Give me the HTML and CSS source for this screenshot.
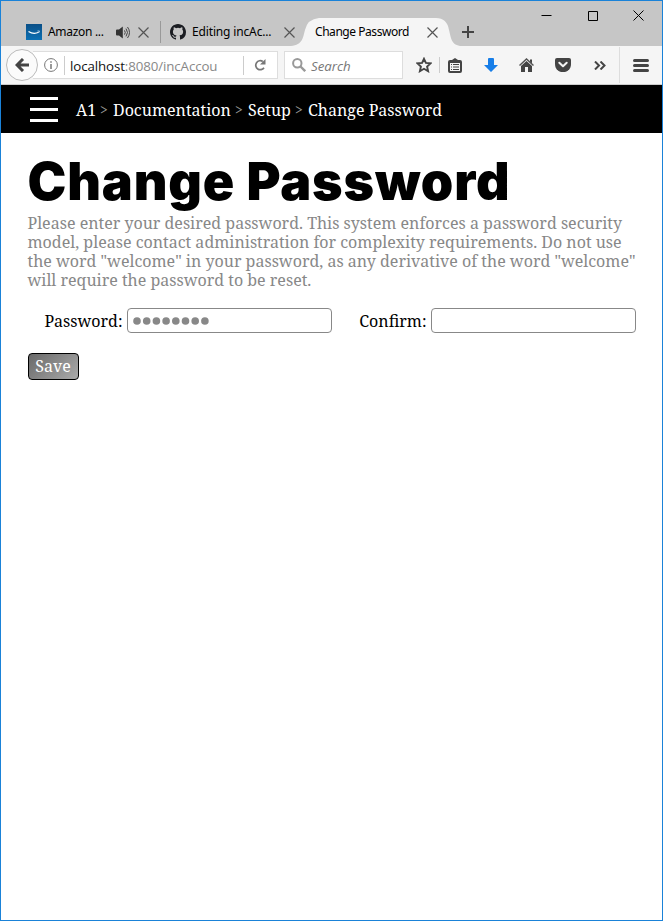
FILE: index.html
```html
<!DOCTYPE html>
<html lang="en">
<head>
<meta charset="utf-8">
<title>Change Password</title>
<link rel="stylesheet" href="styles.css">
</head>
<body>
<div class="window">
  <header class="tabstrip">
    <div class="tab tab-first">
      <svg class="favicon" width="16" height="16" viewBox="0 0 16 16"><defs><linearGradient id="az" x2="0" y2="1"><stop stop-color="#0a4f87"/><stop offset="1" stop-color="#0b70b4"/></linearGradient></defs><path fill="url(#az)" d="M0 0h16v16H0z"/><path d="M2.500 7.500q5 3.200 10.200.8" fill="none" stroke="#fff" stroke-width="1.200"/><path d="M11.500 7h2l-.6 1.700" fill="none" stroke="#cde" stroke-width=".8"/></svg>
      <span class="tab-title title-amazon">Amazon ...</span>
      <svg class="sound" width="14" height="13" viewBox="0 0 14 13"><path d="M0 4.500q0-1 1-1h2L6.800.5v12L3 9.500H1q-1 0-1-1z" fill="#333"/><path d="M8.500 4.400q1.500 2.100 0 4.200M10 2.600q3 3.900 0 7.800M11.500 1q4 5.500 0 11" fill="none" stroke="#444" stroke-width="1"/></svg>
      <svg class="close" width="11" height="11" viewBox="0 0 11 11"><path d="M.5.5l10 10m0-10l-10 10"/></svg>
    </div>
    <div class="tab tab-second">
      <svg class="favicon" width="16" height="16" viewBox="0 0 16 16"><path fill="#1b1d22" d="M8 0C3.580 0 0 3.580 0 8c0 3.540 2.290 6.530 5.470 7.590.4.070.550-.170.550-.380 0-.190-.010-.820-.010-1.490-2.010.370-2.530-.490-2.690-.940-.090-.230-.480-.940-.820-1.130-.280-.150-.680-.520-.010-.530.630-.010 1.080.580 1.230.820.720 1.210 1.870.870 2.330.660.070-.520.280-.870.510-1.070-1.780-.200-3.640-.890-3.640-3.950 0-.870.310-1.590.820-2.150-.080-.200-.360-1.020.080-2.120 0 0 .670-.210 2.200.820a7.600 7.600 0 0 1 4 0c1.530-1.040 2.200-.820 2.200-.820.440 1.100.160 1.920.080 2.120.510.560.820 1.270.820 2.150 0 3.070-1.870 3.750-3.650 3.950.290.250.540.730.540 1.480 0 1.070-.010 1.930-.010 2.200 0 .210.150.460.550.380A8 8 0 0 0 16 8c0-4.420-3.580-8-8-8z"/></svg>
      <span class="tab-title title-edit">Editing incAc...</span>
      <svg class="close" width="11" height="11" viewBox="0 0 11 11"><path d="M.5.5l10 10m0-10l-10 10"/></svg>
    </div>
    <div class="tab tab-active">
      <svg class="tab-shape" width="172" height="28" viewBox="0 0 172 28"><path fill="#f5f5f5" d="M-2 28C12 28 12 19 14 12Q16.500 1 28 0H145Q156 0 158 12C160 19 160 28 171 28z"/></svg>
      <span class="tab-title title-change">Change Password</span>
      <svg class="close" width="11" height="11" viewBox="0 0 11 11"><path d="M.5.5l10 10m0-10l-10 10"/></svg>
    </div>
    <svg class="newtab" width="12" height="12" viewBox="0 0 12 12"><path d="M6 0v12M0 6h12" stroke="#444" stroke-width="2"/></svg>
    <div class="controls">
      <svg width="11" height="11" viewBox="0 0 11 11"><path d="M.5 5.500h10"/></svg>
      <svg width="11" height="11" viewBox="0 0 11 11"><path d="M1.500 1.500h9v9h-9z"/></svg>
      <svg width="11" height="11" viewBox="0 0 11 11"><path d="M.5.5l10 10m0-10l-10 10"/></svg>
    </div>
  </header>

  <nav class="toolbar">
    <div class="back"><svg width="15" height="14" viewBox="0 0 15 14"><path d="M8 1L2 7l6 6M2.500 7H14" fill="none" stroke="#444" stroke-width="3"/></svg></div>
    <div class="urlbar">
      <svg width="14" height="14" viewBox="0 0 14 14"><circle cx="7" cy="7" r="6.400" fill="none" stroke="#777" stroke-width="1"/><path d="M7 3.200v1.600M7 6v5" stroke="#777" stroke-width="1.500"/></svg>
      <span class="rule"></span>
      <span class="url"><b>localhost</b>:8080/incAccou</span>
      <span class="rule"></span>
      <svg class="reload" width="12" height="12" viewBox="0 0 12 12"><path d="M10 8.700A4.500 4.500 0 1 1 8.800 2.500" fill="none" stroke="#777" stroke-width="1.700"/><path d="M11.500 0v5.500H6z" fill="#777"/></svg>
    </div>
    <div class="search">
      <svg width="14" height="14" viewBox="0 0 14 14"><circle cx="5.300" cy="5.300" r="4.200" fill="none" stroke="#999" stroke-width="2"/><path d="M8.500 8.500l4.700 4.700" stroke="#999" stroke-width="2.400"/></svg>
      <span>Search</span>
    </div>
    <div class="tools">
      <svg class="star" width="16" height="16" viewBox="0 0 16 16"><path d="M8 1.800l1.900 4.100 4.600.5-3.400 3.100 1 4.700L8 11.800l-4.100 2.400 1-4.700L1.500 6.400l4.600-.5z" fill="none" stroke="#444" stroke-width="1.900"/></svg>
      <span class="rule"></span>
      <svg class="clip" width="14" height="15" viewBox="0 0 14 15"><path d="M4 2L7 0l3 2h2q2 0 2 2v9q0 2-2 2H2q-2 0-2-2V4q0-2 2-2zM2 5v8h10V5z" fill="#444" fill-rule="evenodd"/><path d="M3 6.500h1M5 6.500h6M3 9h1M5 9h6M3 11.500h1M5 11.500h6" stroke="#444" stroke-width="1.100"/></svg>
      <svg class="down" width="14" height="14" viewBox="0 0 14 14"><path d="M4 1q0-1 1-1h4q1 0 1 1v6h4l-7 7-7-7h4z" fill="#177ee8"/></svg>
      <svg class="home" width="15" height="14" viewBox="0 0 15 14"><path d="M.5 7.500L7.500 1l7 6.500" fill="none" stroke="#555" stroke-width="1.500"/><path d="M11 1.500h2v4l-2-2zM2 8l5.500-5L13 8v6H9V9H6v5H2z" fill="#444"/></svg>
      <svg class="pocket" width="16" height="14" viewBox="0 0 16 14"><path d="M2 0h12q2 0 2 2v4q0 4-3 6.500Q8 16 3 12.500 0 10 0 6V2q0-2 2-2z" fill="#444"/><path d="M4.300 4.700L8 8.300l3.700-3.600" fill="none" stroke="#f5f5f5" stroke-width="2" stroke-linecap="round" stroke-linejoin="round"/></svg>
      <svg class="more" width="12" height="9" viewBox="0 0 12 9"><path d="M1 .5l4 4-4 4M6.500.5l4 4-4 4" fill="none" stroke="#444" stroke-width="2"/></svg>
      <span class="rule tall"></span>
      <svg class="menu" width="16" height="13" viewBox="0 0 16 13"><path d="M1.500 1.500h13M1.500 6.500h13M1.500 11.500h13" stroke="#444" stroke-width="3" stroke-linecap="round"/></svg>
    </div>
  </nav>

  <div class="crumbbar">
    <svg width="28" height="25" viewBox="0 0 28 25"><path d="M0 1.500h28M0 12.500h28M0 23.500h28" stroke="#fff" stroke-width="3"/></svg>
    <div class="crumbs"><span class="c1">A1</span><i>&gt;</i><span class="c2">Documentation</span><i>&gt;</i><span class="c3">Setup</span><i>&gt;</i><span class="c4">Change Password</span></div>
  </div>

  <main>
    <h1>Change Password</h1>
    <p><span>Please enter your desired password. This system enforces a password security</span><span>model, please contact administration for complexity requirements. Do not use</span><span>the word "welcome" in your password, as any derivative of the word "welcome"</span><span>will require the password to be reset.</span></p>
    <form>
      <div class="fields">
        <label>Password:</label>
        <div class="input"><svg width="78" height="8" viewBox="0 0 78 8"><g fill="#888"><circle cx="4" cy="4" r="3.800"/><circle cx="13.700" cy="4" r="3.800"/><circle cx="23.400" cy="4" r="3.800"/><circle cx="33.100" cy="4" r="3.800"/><circle cx="42.800" cy="4" r="3.800"/><circle cx="52.500" cy="4" r="3.800"/><circle cx="62.200" cy="4" r="3.800"/><circle cx="71.900" cy="4" r="3.800"/></g></svg></div>
        <label>Confirm:</label>
        <div class="input"></div>
      </div>
      <button type="button">Save</button>
    </form>
  </main>
</div>
</body>
</html>
```
FILE: styles.css
```css
* { box-sizing: border-box; }
body { margin: 0; background: #fff; }
svg { display: block; flex: none; }
.window { width: 663px; height: 921px; border: 1px solid #1a82d8; overflow: hidden; font-family: "Noto Serif", "Droid Serif", "DejaVu Serif Condensed", "DejaVu Serif", serif; font-stretch: condensed; }

.tabstrip { display: flex; height: 45px; background: #c6c6c6; font: 12px "Noto Sans", sans-serif; color: #000; }
.tab { display: flex; align-items: center; height: 28px; margin-top: 17px; position: relative; white-space: nowrap; }
.tab-title { position: relative; line-height: 28px; flex: none; }
.close { position: relative; stroke: #555; stroke-width: 1.2; fill: none; }
.tab-first { width: 160px; padding-left: 25px; border-right: 1px solid #999; height: 22px; margin-top: 20px; }
.title-amazon { width: 68px; margin-left: 6px; letter-spacing: -0.3px; }
.sound { margin-right: 8px; }
.tab-second { width: 143px; padding-left: 9px; }
.title-edit { width: 92px; margin-left: 6px; letter-spacing: -0.15px; }
.tab-active { width: 148px; padding-left: 11px; }
.tab-shape { position: absolute; left: -13px; top: 0; }
.title-change { width: 112px; letter-spacing: -0.45px; }
.newtab { margin: 25px 0 0 10px; }
.controls { display: flex; gap: 35px; margin: 9px 0 0 67px; }
.controls svg { fill: none; stroke: #000; stroke-width: 1; }

.toolbar { display: flex; align-items: center; height: 39px; background: #f5f5f5; border-bottom: 1px solid #ccc; font: 13.300px "Open Sans", sans-serif; }
.back { position: relative; z-index: 1; width: 32px; height: 32px; margin-left: 5px; border: 1px solid #bbb; border-radius: 50%; background: #fbfbfb; display: flex; align-items: center; justify-content: center; }
.urlbar { display: flex; align-items: center; width: 245px; height: 28px; margin-left: -5px; margin-right: 6px; padding-left: 11px; background: #fff; border: 1px solid #ddd; border-left: 0; }
.rule { width: 1px; height: 19px; background: #ccc; flex: none; }
.urlbar .rule:first-of-type { margin-left: 6px; }
.url { width: 173px; margin-left: 5px; padding-top: 1px; color: #888; white-space: nowrap; letter-spacing: -0.1px; }
.url b { font-weight: 400; color: #111; }
.reload { margin-left: 10px; }
.search { display: flex; align-items: center; gap: 5px; width: 119px; height: 28px; padding-left: 7px; background: #fff; border: 1px solid #ddd; color: #777; font-style: italic; }
.search span { padding-top: 1px; }
.tools { display: flex; align-items: center; height: 38px; }
.star { margin-left: 13px; }
.star + .rule { margin: 0 8px 0 7px; height: 16px; }
.down { margin-left: 22px; }
.home { margin-left: 21px; }
.pocket { margin-left: 21px; }
.more { margin-left: 23px; }
.rule.tall { height: 36px; margin: 0 13px; background: #ddd; }

.crumbbar { display: flex; align-items: center; height: 48px; padding-left: 29px; background: #000; color: #fff; font-size: 16px; }
.crumbs { display: flex; align-items: center; margin: 1px 0 0 18px; white-space: nowrap; }
.crumbs i { width: 10px; margin: 0 3px 0 4px; font-style: normal; font-size: 14px; color: #999; }
.c1 { width: 20px; }
.c2 { width: 118px; }
.c3 { width: 43px; }

main { padding: 25px 26px 0 26.500px; }
h1 { margin: -2px 0 0; font: 900 52px/52px "Inter", sans-serif; letter-spacing: 0.85px; white-space: nowrap; }
p { margin: 6px 0 0; color: #888; font-size: 16px; line-height: 19px; }
p span { display: block; white-space: nowrap; width: max-content; }
.fields { display: flex; align-items: center; margin: 17px 0 0 .5px; height: 26px; font-size: 16px; }
.fields label { width: 99px; padding: 1px 4.500px 0 0; display: flex; justify-content: flex-end; white-space: nowrap; flex: none; }
.input { width: 205px; height: 25px; flex: none; border: 1px solid #888; border-radius: 4px; padding: 8px 0 0 5px; }
button { display: block; width: 51px; height: 27px; margin: 20px 0 0 .5px; padding: 0 1px 2px 0; border: 1px solid #000; border-radius: 4px; background: linear-gradient(135deg, #696969, #aaa); color: #fff; font: inherit; font-size: 16px; }
```
